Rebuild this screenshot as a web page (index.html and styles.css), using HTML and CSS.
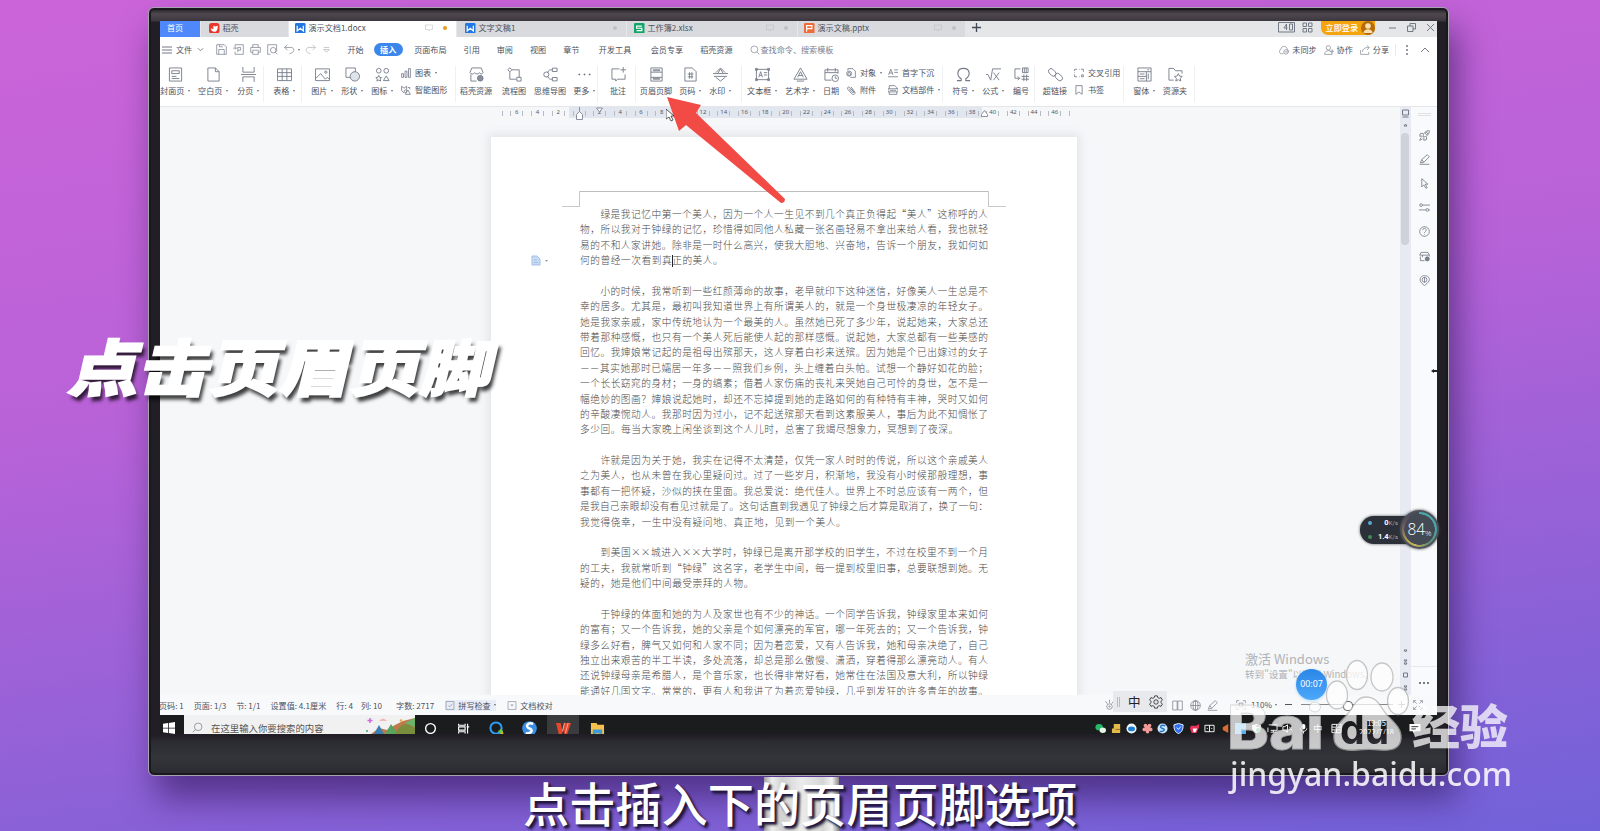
FILE: index.html
```html
<!DOCTYPE html>
<html lang="zh-CN">
<head>
<meta charset="utf-8">
<title>点击页眉页脚</title>
<link rel="stylesheet" href="styles.css">
</head>
<body>
<svg class="defs" width="0" height="0">
<symbol id="cover" viewBox="0 0 16 16"><path d="M1.5 1h13v14h-13zM4 4h8v3H4zM4 10h5M4 12.3h8"/></symbol>
<symbol id="blank" viewBox="0 0 16 16"><path d="M2 1h8l4 4v10H2zM10 1v4h4"/></symbol>
<symbol id="split" viewBox="0 0 16 16"><path d="M2 0v5.500h12V0M0 8h16M2 16v-5.500h12V16"/></symbol>
<symbol id="table" viewBox="0 0 16 16"><path d="M.5 2h15v12.500H.5zM.5 6h15M.5 10h15M5.500 2v12.500M10.500 2v12.500"/></symbol>
<symbol id="pic" viewBox="0 0 16 16"><path d="M.5 2h15v12.500H.5zM1 12l5-5 5 6 2-2 2 2"/><circle cx="11.500" cy="5.500" r="1.200"/></symbol>
<symbol id="shape" viewBox="0 0 16 16"><path d="M1 1h10v10H1z"/><circle cx="10.500" cy="10" r="5" fill="#dfe3ea"/></symbol>
<symbol id="icons" viewBox="0 0 16 16"><circle cx="4" cy="4" r="2.500"/><circle cx="12" cy="4" r="2.500"/><path d="M4 9l1 2 2 .3-1.500 1.500.5 2.200-2-1-2 1 .5-2.200L1 11.300l2-.3zM12 9.500l3 5H9z"/></symbol>
<symbol id="chart" viewBox="0 0 16 16"><path d="M1 9h3v6H1zM6.500 5h3v10h-3zM12 1h3v14h-3z"/></symbol>
<symbol id="smart" viewBox="0 0 16 16"><path d="M1 2l4 3 4-3v6M1 2v7l4 4M7 15l4-7 4 7zM11 4h3v3"/><circle cx="7" cy="10" r="2"/></symbol>
<symbol id="store" viewBox="0 0 16 16"><path d="M1 6l2-5h10l2 5c-1 2-3 2-4 0-1 2-4 2-5 0-1 2-4 2-5 0zM2 8v7h6"/><circle cx="12" cy="12" r="3" fill="#888e9b"/></symbol>
<symbol id="flow" viewBox="0 0 16 16"><path d="M3 .8L5.200 3 3 5.200.8 3zM5.200 3H13v8M3 5.200V13h7M10.500 11h4.500v4h-4.500z"/></symbol>
<symbol id="mind" viewBox="0 0 16 16"><circle cx="3.500" cy="8" r="2.700"/><path d="M5 6c1-3 2-3 5-3M5 10c1 3 2 3 5 3M10 1.200h5v3.600h-5zM10 11.200h5v3.600h-5z"/></symbol>
<symbol id="more" viewBox="0 0 16 16"><path d="M2 7.500h1v1H2zM7.500 7.500h1v1h-1zM13 7.500h1v1h-1z" fill="#5a6070"/></symbol>
<symbol id="comment" viewBox="0 0 16 16"><path d="M9 2H1v11h4v2l2-2h8V8M10 3h6M13 0v6"/></symbol>
<symbol id="hf" viewBox="0 0 16 16"><path d="M2 1h12v14H2zM2 5.500h12M2 11h12" /><path d="M4.500 3h7v1h-7zM4.500 12h7v1h-7z"/></symbol>
<symbol id="pageno" viewBox="0 0 16 16"><path d="M2 1h8l4 4v10H2zM5 7.500h6M5 10.500h6M7 5.500v7M9.500 5.500v7"/></symbol>
<symbol id="wm" viewBox="0 0 16 16"><path d="M0 7h16M1 10h14M3 6l5-5 5 5M3 11l5 4 5-4M5 7l3-5 3 5"/></symbol>
<symbol id="tbox" viewBox="0 0 16 16"><path d="M1.500 2.500h13v11h-13zM.5 1.500h2v2h-2zM13.500 1.500h2v2h-2zM.5 12.500h2v2h-2zM13.500 12.500h2v2h-2zM4 11l2-6 2 6M5 9h2M9.500 6H13M9.500 8.500H13"/></symbol>
<symbol id="wordart" viewBox="0 0 16 16"><path d="M8 1l7 12H1zM5 11l3-6 3 6M6 9h4M4 15h8"/></symbol>
<symbol id="date" viewBox="0 0 16 16"><path d="M8 14H1V3h14v4M1 6h14M4 1v4M12 1v4"/><circle cx="12" cy="12" r="3.500"/><path d="M12 10v2h2"/></symbol>
<symbol id="obj" viewBox="0 0 16 16"><path d="M3 4V1h8l4 4v10H7"/><circle cx="5" cy="9" r="4"/><path d="M3 8l2-1 2 1v3l-2 1-2-1z"/></symbol>
<symbol id="clip" viewBox="0 0 16 16"><path d="M13 12L6 4C4 2 1 4 3 7l6 7c3 3 7 0 5-3L8 3M5 6l5 6c2 1 3 0 2-2L8 6"/></symbol>
<symbol id="drop" viewBox="0 0 16 16"><path d="M1 11L4.500 2 8 11M2 8h5M10 3h6M10 7h6M0 14h16"/></symbol>
<symbol id="part" viewBox="0 0 16 16"><path d="M2 6V1h9l3 3v2M2 11v4h12v-4M0 6h16v5H0zM3 8.500h10"/></symbol>
<symbol id="omega" viewBox="0 0 16 16"><path d="M1 14.500h4.500v-2C0 9 1 1.500 8 1.500s8 7.500 2.500 11v2H15" stroke-width="1.200"/></symbol>
<symbol id="sqrt" viewBox="0 0 16 16"><path d="M0 8h2l3 6L7 2h9M8 6l6 8M14 6l-6 8"/></symbol>
<symbol id="num" viewBox="0 0 16 16"><path d="M7 2H1v10h5M4 10l2 2-2 2M9 1h6v5H9zM11 1v5M13 1v5M8 10h8M8 13h8M10.500 8v7M13.500 8v7"/></symbol>
<symbol id="link" viewBox="0 0 16 16"><rect x="0" y="3" width="9" height="5.500" rx="2.700" transform="rotate(45 4.500 5.700)"/><rect x="7" y="8" width="9" height="5.500" rx="2.700" transform="rotate(45 11.500 10.700)"/></symbol>
<symbol id="xref" viewBox="0 0 16 16"><path d="M1 5V2h4M11 2h4v4M1 10v4h4M8 2h1M1 7v1M8 14h1M12 11h3v3h-3z"/></symbol>
<symbol id="mark" viewBox="0 0 16 16"><path d="M3 1h10v14l-5-4-5 4z"/></symbol>
<symbol id="form" viewBox="0 0 16 16"><path d="M1 1h14v14H1zM1 5h14M1 10h9M10 5v10M12 7v6M3 7.500h5M3 12.500h5M11 3h2"/></symbol>
<symbol id="folder" viewBox="0 0 16 16"><path d="M6 14H1V1.500h5l2 2.500h7v3M11 7l1.300 2.700 2.900.3-2.200 2 .7 3-2.700-1.500L8.300 15l.7-3-2.200-2 2.900-.3z"/></symbol>
<symbol id="save" viewBox="0 0 16 16"><path d="M1 1h11l3 3v11H1zM4 15V8h8v7M5 1v3h5"/></symbol>
<symbol id="pdf" viewBox="0 0 16 16"><path d="M3 4V1h12v14H3v-4M0 6h5M3 4l2 2-2 2M7 12V5h4v4H7"/></symbol>
<symbol id="print" viewBox="0 0 16 16"><path d="M4 5V1h8v4M4 12H1V5h14v7h-3M4 9h8v6H4z"/></symbol>
<symbol id="preview" viewBox="0 0 16 16"><path d="M5 15H1V1h13v10"/><circle cx="9" cy="9" r="4"/><path d="M12 12l3 3"/></symbol>
<symbol id="undo" viewBox="0 0 16 16"><path d="M5 1L1 5l4 4M1 5h9c6 0 6 8-2 9"/></symbol>
<symbol id="redo" viewBox="0 0 16 16"><path d="M11 1l4 4-4 4M15 5H6c-6 0-6 8 2 9"/></symbol>
<symbol id="search" viewBox="0 0 16 16"><circle cx="7" cy="7" r="5.500"/><path d="M11 11l4 4"/></symbol>
<symbol id="cloud" viewBox="0 0 16 16"><path d="M7 14H4C0 14 0 8 3 7c1-7 10-6 10 0 2 1 3 3 2 5"/><circle cx="11" cy="11" r="3.500"/><path d="M9 11h4"/></symbol>
<symbol id="user" viewBox="0 0 16 16"><circle cx="7" cy="4.500" r="3.500"/><path d="M1 15c0-8 12-8 12 0zM10 10h6M13 7v6"/></symbol>
<symbol id="share" viewBox="0 0 16 16"><path d="M1 8v7h13v-4M4 11c0-5 4-7 10-7M11 1l4 3-4 4"/></symbol>
<symbol id="screen" viewBox="0 0 16 16"><path d="M1 2h14v9H9l-1 3-2-3H1z"/></symbol>
<symbol id="rocket" viewBox="0 0 16 16"><path d="M6 10C6 4 10 1 15 1c0 5-3 9-9 9zM6 5H2L1 9h4M11 10v4l-4 1v-4M3 11l-2 4 4-2"/><circle cx="11" cy="5" r="1.500"/></symbol>
<symbol id="pen" viewBox="0 0 16 16"><path d="M2 13l2-5 8-7 3 3-8 8zM4 8l3 4M1 15h14"/></symbol>
<symbol id="cursor" viewBox="0 0 16 16"><path d="M4 1l9 8H9l3 5-2 1-3-5-3 3z"/></symbol>
<symbol id="sliders" viewBox="0 0 16 16"><circle cx="3" cy="4.500" r="2"/><circle cx="12" cy="11.500" r="2"/><path d="M5 4.500h11M0 11.500h10M14 11.500h2"/></symbol>
<symbol id="help" viewBox="0 0 16 16"><circle cx="8" cy="8" r="7"/><path d="M5.500 6c0-4 5-3 5 0 0 2-2.500 2-2.500 4M8 11.500v1"/></symbol>
<symbol id="skin" viewBox="0 0 16 16"><path d="M8 14H2V8M1 6l2-4h10l2 4v2M1 6h14M5 6v3"/><circle cx="12" cy="11.500" r="3" fill="#777d8a"/></symbol>
<symbol id="pin" viewBox="0 0 16 16"><path d="M8 15.500L4 12C-2 5 5 0 8 1c8 0 9 7 4 11z"/><circle cx="8" cy="7" r="3.500"/><path d="M8 3v8"/></symbol>
<symbol id="book" viewBox="0 0 16 16"><path d="M1 1.500h6.500v13H1zM8.500 1.500H15v13H8.500z"/></symbol>
<symbol id="globe" viewBox="0 0 16 16"><circle cx="8" cy="8" r="7"/><path d="M8 1v14M1 8h14"/><ellipse cx="8" cy="8" rx="3.500" ry="7"/></symbol>
<symbol id="gear" viewBox="0 0 16 16"><path d="M6.500 1h3l.6 2 1.700.8 2-.8 1.500 2.600-1.500 1.500v1.800l1.500 1.500-1.500 2.600-2-.8-1.700.8-.6 2h-3l-.6-2-1.700-.8-2 .8L.7 10.400l1.500-1.500V7.100L.7 5.600 2.200 3l2 .8L5.900 3z"/><circle cx="8" cy="8" r="2.500"/></symbol>
<symbol id="box" viewBox="0 0 16 16"><path d="M1 1h14v14H1zM5 8l2.500 2.500L12 5"/></symbol>
<symbol id="boxx" viewBox="0 0 16 16"><path d="M1 1h14v14H1zM6 5.500l4 4M10 5.500l-4 4"/></symbol>
<symbol id="eye" viewBox="0 0 16 16"><path d="M2 3l3 4M8 1v5M14 3l-3 4"/><circle cx="8" cy="11" r="4"/><circle cx="8" cy="11" r="1"/></symbol>
</svg>

<main class="monitor">
<div class="screen">
  <header class="tabs">
    <div class="tab home">首页</div>
    <div class="tab docer"><svg class="badge" viewBox="0 0 12 12"><rect width="12" height="12" rx="3" fill="#e8382d"/><path d="M2 6l3 1V3l2 1 3-1c0 6-2 7-4 7S2 8 2 6z" fill="#fff"/></svg>稻壳</div>
    <div class="tab active"><svg class="badge" viewBox="0 0 12 12"><rect width="12" height="12" rx="1.500" fill="#2276e0"/><path d="M2.500 3v6L6 6l3.500 3V3" fill="none" stroke="#fff" stroke-width="1.400"/></svg>演示文档1.docx<svg class="mini"><use href="#screen"/></svg><i class="dot amber"></i></div>
    <div class="tab word"><svg class="badge" viewBox="0 0 12 12"><rect width="12" height="12" rx="1.500" fill="#2276e0"/><path d="M2.500 3v6L6 6l3.500 3V3" fill="none" stroke="#fff" stroke-width="1.400"/></svg>文字文稿1<i class="dot"></i></div>
    <div class="tab sheet"><svg class="badge" viewBox="0 0 12 12"><rect width="12" height="12" rx="1.500" fill="#12a568"/><path d="M9 3.500H3V6h6v2.700H3" fill="none" stroke="#fff" stroke-width="1.300"/></svg>工作簿2.xlsx<svg class="mini"><use href="#screen"/></svg><i class="dot"></i></div>
    <div class="tab slide"><svg class="badge" viewBox="0 0 12 12"><rect width="12" height="12" rx="1.500" fill="#ee6a37"/><path d="M3 10V3h6v3.500H3" fill="none" stroke="#fff" stroke-width="1.300"/></svg>演示文稿.pptx<svg class="mini"><use href="#screen"/></svg><i class="dot"></i></div>
    <svg class="plus" viewBox="0 0 9 9"><path d="M0 4.500h9M4.500 0v9"/></svg>
    <div class="window-tools">
      <svg class="w1" viewBox="0 0 17 11"><path d="M.5 .5h16v9.500H.5zM8.500 2v6M8.500 2L6 6h3.500M11.500 2h3v6h-3z"/></svg>
      <svg class="w2" viewBox="0 0 11 11"><path d="M1 1h3.500v3.500H1zM6.500 1H10v3.500H6.500zM1 6.500h3.500V10H1zM6.500 6.500H10V10H6.500z"/></svg>
      <span class="login">立即登录<svg viewBox="0 0 14 14"><circle cx="7" cy="7" r="7" fill="#b56c09"/><circle cx="7" cy="5" r="2.800" fill="#f8e0b0"/><path d="M2.500 12c0-5 9-5 9 0z" fill="#f8e0b0"/></svg></span>
      <svg class="w3" viewBox="0 0 9 9"><path d="M1 5h7"/></svg>
      <svg class="w3" viewBox="0 0 9 9"><path d="M.5 3h5.500v5.500H.5zM3 3V.5h5.500V6H6"/></svg>
      <svg class="w3" viewBox="0 0 9 9"><path d="M1 1l7 7M8 1L1 8"/></svg>
    </div>
  </header>

  <nav class="menu">
    <svg class="burger" viewBox="0 0 10 8"><path d="M0 1h10M0 4h10M0 7h10"/></svg><span class="file">文件</span><svg class="chev" viewBox="0 0 8 8"><path d="M1 2.500l3 3 3-3"/></svg>
    <span class="quick"><svg><use href="#save"/></svg><svg><use href="#pdf"/></svg><svg><use href="#print"/></svg><svg><use href="#preview"/></svg><svg><use href="#undo"/></svg><i></i><svg class="pale"><use href="#redo"/></svg><svg class="pale" viewBox="0 0 16 16"><path d="M4 5h8M4 8l4 4 4-4z"/></svg></span>
    <span class="m-start">开始</span><span class="pill">插入</span><span class="m-layout">页面布局</span><span class="g17">引用</span><span class="g17">审阅</span><span class="g17">视图</span><span class="g17">章节</span><span class="g20">开发工具</span><span class="g20">会员专享</span><span class="g17">稻壳资源</span>
    <span class="find"><svg><use href="#search"/></svg>查找命令、搜索模板</span>
    <span class="right"><svg><use href="#cloud"/></svg>未同步<svg><use href="#user"/></svg>协作<svg><use href="#share"/></svg>分享</span>
    <span class="tail"><svg class="dots" viewBox="0 0 2 10"><path d="M0 1h2M0 5h2M0 9h2"/></svg><svg viewBox="0 0 10 8"><path d="M1 6l4-4 4 4"/></svg></span>
  </nav>

  <section class="ribbon">
    <div class="it i3"><svg><use href="#cover"/></svg><span>封面页<i></i></span></div>
    <div class="it i14"><svg><use href="#blank"/></svg><span>空白页<i></i></span></div>
    <div class="it i11"><svg><use href="#split"/></svg><span>分页<i></i></span></div>
    <div class="it i12 sep"><svg><use href="#table"/></svg><span>表格<i></i></span></div>
    <div class="it i14 sep"><svg><use href="#pic"/></svg><span>图片<i></i></span></div>
    <div class="it i6"><svg><use href="#shape"/></svg><span>形状<i></i></span></div>
    <div class="it i6"><svg><use href="#icons"/></svg><span>图标<i></i></span></div>
    <div class="pair p-chart"><div><svg><use href="#chart"/></svg>图表<i></i></div><div><svg><use href="#smart"/></svg>智能图形</div></div>
    <div class="it i13 sep"><svg><use href="#store"/></svg><span>稻壳资源</span></div>
    <div class="it i14"><svg><use href="#flow"/></svg><span>流程图</span></div>
    <div class="it i12"><svg><use href="#mind"/></svg><span>思维导图</span></div>
    <div class="it i10"><svg><use href="#more"/></svg><span>更多<i></i></span></div>
    <div class="it i10 sep"><svg><use href="#comment"/></svg><span>批注</span></div>
    <div class="it i14 sep"><svg><use href="#hf"/></svg><span>页眉页脚</span></div>
    <div class="it i10"><svg><use href="#pageno"/></svg><span>页码<i></i></span></div>
    <div class="it i6"><svg><use href="#wm"/></svg><span>水印<i></i></span></div>
    <div class="it i18 sep"><svg><use href="#tbox"/></svg><span>文本框<i></i></span></div>
    <div class="it i14"><svg><use href="#wordart"/></svg><span>艺术字<i></i></span></div>
    <div class="it i7"><svg><use href="#date"/></svg><span>日期</span></div>
    <div class="pair p-obj"><div><svg><use href="#obj"/></svg>对象<i></i></div><div><svg><use href="#clip"/></svg>附件</div></div>
    <div class="pair p-drop"><div><svg><use href="#drop"/></svg>首字下沉</div><div><svg><use href="#part"/></svg>文档部件<i></i></div></div>
    <div class="it i11 sep"><svg><use href="#omega"/></svg><span>符号<i></i></span></div>
    <div class="it i6"><svg><use href="#sqrt"/></svg><span>公式<i></i></span></div>
    <div class="it i4"><svg><use href="#num"/></svg><span>编号</span></div>
    <div class="it i10 sep"><svg><use href="#link"/></svg><span>超链接</span></div>
    <div class="pair p-ref"><div><svg><use href="#xref"/></svg>交叉引用</div><div><svg><use href="#mark"/></svg>书签</div></div>
    <div class="it i10 sep"><svg><use href="#form"/></svg><span>窗体<i></i></span></div>
    <div class="it i7"><svg><use href="#folder"/></svg><span>资源夹</span></div>
    <div class="ribbon-end"></div>
  </section>

  <section class="work">
    <div class="canvas">
      <div class="ruler">
        <b class="end"></b><b>6</b><b>4</b><b>2</b><b class="in hid"></b><b class="in">2</b><b class="in">4</b><b class="in">6</b><b class="in">8</b><b class="in">10</b><b class="in">12</b><b class="in">14</b><b class="in">16</b><b class="in">18</b><b class="in">20</b><b class="in">22</b><b class="in">24</b><b class="in">26</b><b class="in">28</b><b class="in">30</b><b class="in">32</b><b class="in">34</b><b class="in">36</b><b class="in">38</b><b>40</b><b>42</b><b>44</b><b>46</b><b class="end"></b>
      </div>
      <svg class="stops" viewBox="0 0 430 16"><path d="M10.500 0v6M7.500 8.500l3-3 3 3v5h-6zM27.500 2h6l-3 4zM412.500 8.500l3-4 3 4v2h-6z"/></svg>
      <article class="page">
        <div class="margin-marks"><i class="ml"></i><i class="mt"></i><i class="mr"></i></div>
        <div class="text">
<p class="in">绿是我记忆中第一个美人，因为一个人一生见不到几个真正负得起“美人”这称呼的人</p>
<p>物，所以我对于钟绿的记忆，珍惜得如同他人私藏一张名画轻易不拿出来给人看，我也就轻</p>
<p>易的不和人家讲她。除非是一时什么高兴，使我大胆地、兴奋地，告诉一个朋友，我如何如</p>
<p class="last">何的曾经一次看到真<u></u>正的美人。</p>
<p class="gap"></p>
<p class="in">小的时候，我常听到一些红颜薄命的故事，老早就印下这种迷信，好像美人一生总是不</p>
<p>幸的居多。尤其是，最初叫我知道世界上有所谓美人的，就是一个身世极凄凉的年轻女子。</p>
<p>她是我家亲戚，家中传统地认为一个最美的人。虽然她已死了多少年，说起她来，大家总还</p>
<p>带着那种感慨，也只有一个美人死后能使人起的那样感慨。说起她，大家总都有一些美感的</p>
<p>回忆。我婶娘常记起的是祖母出殡那天，这人穿着白衫来送殡。因为她是个已出嫁过的女子</p>
<p>－－其实她那时已孀居一年多－－照我们乡例，头上缠着白头帕。试想一个静好如花的脸；</p>
<p>一个长长窈窕的身材；一身的缟素；借着人家伤痛的丧礼来哭她自己可怜的身世，怎不是一</p>
<p>幅绝妙的图画？婶娘说起她时，却还不忘掉提到她的走路如何的有种特有丰神，哭时又如何</p>
<p>的辛酸凄惋动人。我那时因为过小，记不起送殡那天看到这素服美人，事后为此不知惆怅了</p>
<p class="last">多少回。每当大家晚上闲坐谈到这个人儿时，总害了我竭尽想象力，冥想到了夜深。</p>
<p class="gap"></p>
<p class="in">许就是因为关于她，我实在记得不太清楚，仅凭一家人时时的传说，所以这个亲戚美人</p>
<p>之为美人，也从未曾在我心里疑问过。过了一些岁月，积渐地，我没有小时候那般理想，事</p>
<p>事都有一把怀疑，沙似的挟在里面。我总爱说：绝代佳人。世界上不时总应该有一两个，但</p>
<p>是我自己亲眼却没有看见过就是了。这句话直到我遇见了钟绿之后才算是取消了，换了一句：</p>
<p class="last">我觉得侥幸，一生中没有疑问地、真正地，见到一个美人。</p>
<p class="gap"></p>
<p class="in">到美国××城进入××大学时，钟绿已是离开那学校的旧学生，不过在校里不到一个月</p>
<p>的工夫，我就常听到“钟绿”这名字，老学生中间，每一提到校里旧事，总要联想到她。无</p>
<p class="last">疑的，她是他们中间最受崇拜的人物。</p>
<p class="gap"></p>
<p class="in">于钟绿的体面和她的为人及家世也有不少的神话。一个同学告诉我，钟绿家里本来如何</p>
<p>的富有；又一个告诉我，她的父亲是个如何漂亮的军官，哪一年死去的；又一个告诉我，钟</p>
<p>绿多么好看，脾气又如何和人家不同；因为着恋爱，又有人告诉我，她和母亲决绝了，自己</p>
<p>独立出来艰苦的半工半读，多处流落，却总是那么傲慢、潇洒，穿着得那么漂亮动人。有人</p>
<p>还说钟绿母亲是希腊人，是个音乐家，也长得非常好看，她常住在法国及意大利，所以钟绿</p>
<p>能通好几国文字。常常的，更有人和我讲了为着恋爱钟绿，几乎到发狂的许多青年的故事。</p>
        </div>
        <svg class="para-tag" viewBox="0 0 18 11"><path d="M1 1h5l3 3v6H1z" fill="#c9dcf5" stroke="#a3bfe8"/><path d="M3 5h3M3 7.500h4" stroke="#a3bfe8"/><path d="M14 5h3l-1.500 2z" fill="#999"/></svg>
      </article>
      <div class="activate"><strong>激活 Windows</strong><span>转到"设置"以激活 Windows。</span></div>
    </div>
    <div class="scroll"><svg viewBox="0 0 11 26"><path d="M2.500 3h6v5h-6zM2.500 10h6M4 19l1.500-2L7 19z"/></svg><div class="thumb"></div><svg class="pager" viewBox="0 0 11 52"><path d="M4 7l1.500 2L7 7zM4 17l1.500 2L7 17zM4 20l1.500 2L7 20zM3.500 30h4v4h-4zM4 43l1.500 2L7 43zM4 46l1.500 2L7 46z"/></svg></div>
    <aside class="side"><em></em><svg><use href="#rocket"/></svg><svg><use href="#pen"/></svg><svg><use href="#cursor"/></svg><svg><use href="#sliders"/></svg><svg><use href="#help"/></svg><svg><use href="#skin"/></svg><svg><use href="#pin"/></svg><svg class="notch" viewBox="0 0 6 4"><path d="M0 2l3-2v1h3v2H3v1z" fill="#222" stroke="none"/></svg><div class="side-more"><svg viewBox="0 0 12 4"><path d="M1 1h2v2H1zM5 1h2v2H5zM9 1h2v2H9z" fill="#777c88" stroke="none"/></svg></div></aside>
  </section>

  <footer class="status">
    <span>页码: 1</span><span>页面: 1/3</span><span>节: 1/1</span><span>设置值: 4.1厘米</span><span>行: 4</span><span class="col">列: 10</span><span class="cnt">字数: 2717</span><span class="chk"><svg><use href="#box"/></svg>拼写检查<i></i></span><span class="proof"><svg><use href="#boxx"/></svg>文档校对</span>
    <svg class="eye"><use href="#eye"/></svg>
    <span class="view"><svg><use href="#book"/></svg><svg><use href="#globe"/></svg><svg><use href="#pen"/></svg></span>
    <span class="zoom"><svg viewBox="0 0 16 16"><path d="M1 5V1h4M11 1h4v4M1 11v4h4M11 15h4v-4M5 5h6v6H5z"/></svg>110%<i></i><b class="minus"></b><b class="track"></b><svg class="plus-z" viewBox="0 0 8 8"><path d="M0 4h8M4 0v8"/></svg><svg class="full" viewBox="0 0 16 16"><path d="M1 5V1h4M1 1l5 5M11 1h4v4M15 1l-5 5M1 11v4h4M1 15l5-5M11 15h4v-4M15 15l-5-5"/></svg></span>
    <div class="ime"><i></i>中<svg><use href="#gear"/></svg></div>
  </footer>

  <footer class="taskbar">
    <svg class="start" viewBox="0 0 12 12"><path d="M0 1.700l5-.7v4.700H0zM5.800.9L12 0v5.700H5.800zM0 6.400h5V11l-5-.7zM5.800 6.400H12V12l-6.200-.9z" fill="#fff"/></svg>
    <div class="searchbox"><svg><use href="#search"/></svg>在这里输入你要搜索的内容
      <svg class="art" viewBox="0 0 50 16"><path d="M6 16l8-6 8 2 8-5 8-4 12-3v16z" fill="#bd7a4b"/><path d="M9 16l5-9 5 9z" fill="#3a7fb0"/><path d="M20 16l6-10 7 10z" fill="#5ba45e"/><path d="M30 16q8-16 20-6v6z" fill="#7a8d3c"/><path d="M40 5l10-5v9z" fill="#6cb36b"/><path d="M14 3q4-5 8 0z" fill="#f3b9b6"/><path d="M5 0v5M2.500 2.500h5" stroke="#c86bdc" stroke-width="1.500"/><circle cx="36" cy="2.500" r="1.200" fill="#f0a42f"/><circle cx="2" cy="13" r="1" fill="#3da86a"/></svg>
    </div>
    <div class="apps">
      <svg viewBox="0 0 16 16"><circle cx="8" cy="8" r="6" fill="none" stroke="#fff" stroke-width="1.700"/></svg>
      <svg viewBox="0 0 16 16"><path d="M2 2v2h8V2M2 14v-2h8v2M2 6h8v4H2zM13 2v12M12 6h3" fill="none" stroke="#fff" stroke-width="1.400"/></svg>
      <svg viewBox="0 0 16 16"><circle cx="7.500" cy="7.500" r="6" fill="none" stroke="#2f9cf2" stroke-width="2.200"/><path d="M10 11h5M12.500 8.500v5.500" stroke="#6fc94a" stroke-width="1.800"/><circle cx="14" cy="13" r="1.300" fill="#f4b32a"/></svg>
      <svg viewBox="0 0 16 16"><circle cx="8" cy="8" r="7.800" fill="#3a8ee6"/><path d="M12 3c-6-2-9 3-4 5s1 6-4 5" fill="none" stroke="#fff" stroke-width="2.600"/></svg>
      <span class="wps"><svg viewBox="0 0 16 16"><path d="M0 2h5l2 9 2-9h7l-4 12H9L8 9l-2 5H3z" fill="#e8452c"/><path d="M9 2l-2 9M13 2l-3 11" stroke="#ffb29e"/></svg></span>
      <svg viewBox="0 0 16 16"><path d="M1 2h6l1 2h7v12H1z" fill="#f5c04c"/><path d="M3 9h10v7h-3v-3H6v3H3z" fill="#3f9cd8"/></svg>
    </div>
    <div class="tray">
      <svg viewBox="0 0 12 12"><ellipse cx="4.500" cy="4.500" rx="4" ry="3.500" fill="#25b866"/><ellipse cx="8.500" cy="8" rx="3.500" ry="3" fill="#e4f5ea"/></svg>
      <svg viewBox="0 0 12 12"><path d="M3 1h7v10H1V6h2z" fill="#e5b94a"/><path d="M5 7h5" stroke="#8d6a1c"/></svg>
      <svg viewBox="0 0 12 12"><circle cx="6" cy="6" r="5.500" fill="#eef6fb"/><ellipse cx="6" cy="6.500" rx="3.800" ry="2.600" fill="#1d7fd0"/></svg>
      <svg viewBox="0 0 12 12"><g fill="#f19a98"><circle cx="6" cy="6" r="3.200"/><circle cx="3.800" cy="2.800" r="2"/><circle cx="8.200" cy="2.800" r="2"/><circle cx="2.500" cy="7" r="2"/><circle cx="9.500" cy="7" r="2"/><circle cx="6" cy="9.500" r="2"/></g></svg>
      <svg viewBox="0 0 12 12"><circle cx="6" cy="6" r="5.500" fill="#cfe6f8"/><path d="M9 3C4 1 2 5 6 6s1 4-3 3" fill="none" stroke="#2276c8" stroke-width="1.600"/></svg>
      <svg viewBox="0 0 12 12"><path d="M6 .5l5 1.500c0 5-1 8-5 9.500C2 10 1 7 1 2z" fill="#2e6ef0" stroke="#fff"/><path d="M4 5l2 2 2.500-3" fill="none" stroke="#fff"/></svg>
      <svg viewBox="0 0 12 12"><path d="M2 3h6l3-2v4L8 11H3L1 6z" fill="#e7325b"/><path d="M4 6h5l-2 4H5z" fill="#fff"/></svg>
      <svg viewBox="0 0 12 12"><path d="M1 2.500h10v7H1zM6 2.500v7M3 6h1M8 6h1" fill="none" stroke="#fff"/></svg>
      <svg viewBox="0 0 12 12"><path d="M3 4.500L9 1v10L3 7.500z" fill="#d96a35"/></svg>
      <svg viewBox="0 0 12 12"><rect width="12" height="12" fill="#5cb0e8"/></svg>
      <svg viewBox="0 0 12 12"><path d="M6 1l5 1.500C11 8 9 10 6 11 3 10 1 8 1 2.500z" fill="#eee"/><circle cx="8" cy="8" r="2.500" fill="#4aa861"/></svg>
      <svg viewBox="0 0 12 12"><path d="M2 2h9v6H4M7 8v2M4 10h6M1 5v5" fill="none" stroke="#fff"/></svg>
      <svg viewBox="0 0 12 12"><path d="M1 4h2l3-2v8L3 8H1zM8 4l3 4M11 4L8 8" fill="none" stroke="#fff"/></svg>
      <svg viewBox="0 0 12 12"><rect x="4" y="1" width="4" height="6" rx="2" fill="#fff"/><path d="M2.500 6c0 4 7 4 7 0M6 9v2.500" fill="none" stroke="#fff"/></svg>
      <span>中</span><svg class="grid" viewBox="0 0 12 12"><path d="M1 1.500h10v9H1zM1 4.500h10M1 7.500h10M6 1.500v9" fill="none" stroke="#fff"/></svg>
      <span class="clock">19:05<br>2022/7/18</span>
      <svg class="note" viewBox="0 0 12 12"><path d="M0 1h12v8H6l-2 2V9H0z" fill="#fff"/><path d="M2 4h8M2 6.500h5" stroke="#222"/></svg>
    </div>
  </footer>
</div>
</main>

<svg class="arrow" viewBox="0 0 130 120"><path d="M1 2L35 10 30 18 119 104Q119 108 115 108L20 30 13 36z" fill="#f24a44"/><path d="M0 14v10l3-2 2 4 2-1-2-4h3z" fill="#fff" stroke="#333" stroke-width=".8"/></svg>
<div class="speed"><div class="rates"><span><i></i>0<small>K/s</small></span><span><i></i>1.4<small>K/s</small></span></div><div class="gauge">84<small>%</small></div></div>
<div class="timer">00:07</div>
<div class="headline">点击页眉页脚</div>
<div class="stand"></div>
<div class="subtitle">点击插入下的页眉页脚选项</div>
<svg class="brand" viewBox="0 0 300 165">
  <defs><mask id="cut" maskUnits="userSpaceOnUse" x="0" y="0" width="300" height="165"><rect width="300" height="165" fill="#fff"/><text x="125" y="104" class="du" textLength="49" lengthAdjust="spacingAndGlyphs">du</text></mask></defs>
  <g class="overlay">
    <text x="12" y="109" class="bai" textLength="97" lengthAdjust="spacingAndGlyphs">Bai</text>
    <path class="outlined" d="M151 57c12 0 14 10 21 18 8 8 15 14 14 24-1 9-9 12-20 11-9-1-15-1-24 0-11 1-22-1-23-11-1-9 4-15 10-21 9-8 11-21 22-21z" mask="url(#cut)"/>
    <ellipse class="outlined" cx="122" cy="55" rx="10.500" ry="14"/><ellipse class="outlined" cx="142" cy="35" rx="10.500" ry="14.500"/><ellipse class="outlined" cx="167" cy="37" rx="11" ry="14"/><ellipse class="outlined" cx="183" cy="61" rx="10.500" ry="13.500"/>
    <text x="197" y="104" class="jy" textLength="96" lengthAdjust="spacingAndGlyphs">经验</text>
  </g>
  <text x="15" y="146" class="site" textLength="282" lengthAdjust="spacingAndGlyphs">jingyan.baidu.com</text>
</svg>
</body>
</html>
```
FILE: styles.css
```css
* { box-sizing: border-box; }
body {
  margin: 0; width: 1600px; height: 831px; overflow: hidden; position: relative;
  display: flex; justify-content: flex-start; align-items: flex-start;
  font-family: "Noto Sans CJK SC", "Noto Sans", sans-serif; font-size: 8.1px; color: #4d5260;
  background: linear-gradient(172deg, #cc64d9 0%, #b862d8 42%, #8961d7 80%, #7162d9 100%);
}
svg { fill: none; stroke: #737987; stroke-width: 1; display: block; flex: none; }
.defs { position: absolute; }
.monitor {
  margin: 7px 0 0 148px; width: 1301px; height: 769px; padding: 13px 12px 0; border-radius: 6px;
  border: 1px solid #a9a2b0; background: linear-gradient(#1b1a1f 0, #50484f 6px, #3b363e 13px, #221e25 14px, #221e25 728px, #2a2c31 733px, #34353b 750px, #29292e 768px);
  box-shadow: 8px 22px 34px rgba(45, 20, 85, .6), inset 0 0 0 2px #19181c;
}
.screen { width: 1277px; height: 713px; display: flex; flex-direction: column; overflow: hidden; background: #fff; margin-left: -1px; }

.tabs { height: 16px; flex: none; display: flex; background: #e4e6e8; }
.tab { height: 16px; display: flex; align-items: center; background: #d9dade; padding: 0 6px 2px; border-left: 1px solid #e6e7ea; white-space: nowrap; line-height: 12px; }
.home { width: 40px; background: #4f88fa; color: #fff; border: 0; padding-left: 7px; }
.docer { width: 88px; padding-left: 8px; }
.active { width: 168px; background: #fff; }
.word { width: 170px; padding-left: 8px; }
.sheet { width: 171px; padding-left: 7px; }
.slide { width: 168px; }
.badge { width: 10.500px; height: 10.500px; margin-right: 3px; stroke: none; }
.mini { width: 8px; height: 8px; margin-left: auto; stroke: #b6b9c0; }
.dot { width: 4px; height: 4px; border-radius: 2px; background: #bfc1c6; margin: 0 3px 0 10px; }
.word .dot { margin-left: auto; }
.dot.amber { background: #e99a1b; }
.plus { width: 9px; height: 9px; margin: 2px 0 0 7px; stroke: #444a55; stroke-width: 1.300; }
.window-tools { margin-left: auto; display: flex; align-items: center; padding: 0 2px 3px 0; }
.w1 { width: 17px; height: 11px; margin-right: 7px; }
.w2 { width: 11px; height: 11px; margin-right: 8px; }
.w3 { width: 9px; height: 9px; margin-left: 10px; }
.login { width: 54px; height: 14px; border-radius: 0 0 7px 7px; background: #f6a40e; color: #fff; display: flex; align-items: center; justify-content: flex-end; gap: 3px; font-weight: 500; margin-right: 3px; }
.login svg { width: 14px; height: 14px; stroke: none; }

.menu { height: 26px; flex: none; display: flex; align-items: center; white-space: nowrap; padding: 0 0 1px 2px; }
.burger { width: 10px; height: 8px; margin-right: 4px; }
.chev { width: 7px; height: 7px; margin-left: 5px; }
.quick { display: flex; align-items: center; margin-left: 12px; gap: 5.900px; }
.quick svg { width: 11px; height: 11px; }
.quick i { border: 1.500px solid transparent; border-top: 2px solid #676d7a; border-bottom: 0; margin: 0 -1px 0 -3px; }
.quick .pale { stroke: #a9adb7; }
.m-start { margin-left: 15px; }
.pill { background: #3a86ea; color: #fff; font-weight: 600; width: 29px; height: 13px; border-radius: 7px; display: flex; align-items: center; justify-content: center; margin-left: 10px; }
.m-layout { margin-left: 11.500px; }
.g17 { margin-left: 17px; } .g20 { margin-left: 19.500px; }
.find { display: flex; align-items: center; margin-left: 17px; color: #7a8292; gap: 1px; }
.find svg { width: 10px; height: 10px; }
.right { display: flex; align-items: center; margin-left: auto; }
.right svg { width: 10px; height: 10px; margin: 0 3px 0 7px; }
.tail { display: flex; align-items: center; border-left: 1px solid #e8eaed; margin-left: 6px; padding: 0 7px 0 10px; gap: 12px; height: 12px; }
.tail svg { width: 10px; height: 8px; }
.tail .dots { width: 2px; height: 10px; stroke-width: 1.500; }

.ribbon { height: 44px; flex: none; display: flex; padding-top: 3px; border-bottom: 1px solid #e4e6ea; }
.it { width: 24px; display: flex; flex-direction: column; align-items: center; position: relative; white-space: nowrap; flex: none; }
.it svg { width: 15px; height: 15px; stroke-width: .95; margin-top: 1px; }
.it > span { line-height: 12px; margin-top: 3px; display: flex; align-items: center; }
.ribbon i, .status i { border: 1.500px solid transparent; border-top: 2px solid #676d7a; border-bottom: 0; margin-left: 3.500px; width: 0; height: 0; }
.i3 { margin-left: 3px; } .i4 { margin-left: 4px; } .i6 { margin-left: 6px; } .i7 { margin-left: 7px; }
.i10 { margin-left: 10px; } .i11 { margin-left: 11px; } .i12 { margin-left: 12px; } .i13 { margin-left: 13px; } .i14 { margin-left: 14px; } .i18 { margin-left: 18px; }
.sep::before { content: ""; position: absolute; left: -9px; top: 0; height: 36px; border-left: 1px solid #eff0f3; }
.pair { display: flex; flex-direction: column; gap: 5px; flex: none; white-space: nowrap; padding-top: 1px; }
.pair div { height: 12px; display: flex; align-items: center; line-height: 12px; }
.pair svg { width: 10px; height: 10px; margin-right: 4px; stroke-width: 1.300; }
.p-chart { margin-left: 7px; width: 50px; } .p-obj { margin-left: 3px; width: 40px; } .p-drop { margin-left: 2px; width: 52px; } .p-ref { margin-left: 7px; width: 48px; }
.ribbon-end { margin-left: 7px; height: 36px; border-left: 1px solid #eff0f3; }

.work { height: 588px; flex: none; display: flex; }
.canvas { width: 1240px; background: #f5f7f9; position: relative; overflow: hidden; }
.ruler { height: 11px; display: flex; padding-left: 325.800px; }
.ruler b { width: 20.690px; height: 11px; display: flex; justify-content: center; font: 6px/10px "Noto Sans", sans-serif; color: #545a67; position: relative; }
.ruler b::before, .ruler b::after { content: ""; position: absolute; top: 4px; height: 5px; width: 1px; background: #b6bac3; left: 4px; }
.ruler b::after { left: 16px; }
.ruler .in { background: #e2e6ef; }
.ruler .end::before { display: none; }
.ruler .end:last-child::before { display: block; } .ruler .end:last-child::after { display: none; }
.stops { position: absolute; left: 409px; top: -1px; width: 430px; height: 16px; stroke: #8b90a0; fill: #fff; }
.page { width: 586px; height: 559px; margin: 19px 0 0 331px; background: #fff; box-shadow: 0 0 9px 3px #e3e5e8; position: relative; }
.margin-marks { display: grid; grid-template-columns: 18px 408px 18px; height: 70px; padding-top: 54px; margin-left: 71px; }
.margin-marks i { height: 16px; }
.ml { border-right: 1px solid #c9c9c9; border-bottom: 1px solid #c9c9c9; }
.mt { border-top: 1.500px solid #bdbdbd; }
.mr { border-left: 1px solid #c9c9c9; border-bottom: 1px solid #c9c9c9; }
.text { width: 408px; margin-left: 89px; font-size: 9.700px; font-weight: 300; color: #494949; text-spacing-trim: space-all; }
.text p { margin: 0; height: 15.380px; line-height: 15.380px; white-space: nowrap; text-align: justify; text-align-last: justify; }
.text .in { padding-left: 20.400px; }
.text .last { text-align-last: left; letter-spacing: .55px; }
.text u { display: inline-block; width: 1px; height: 12px; margin-right: -1px; background: #222; vertical-align: middle; }
.para-tag { position: absolute; left: 40px; top: 118px; width: 18px; height: 11px; stroke: none; }
.activate { position: absolute; left: 1085px; top: 543px; color: #b1b3b6; display: flex; flex-direction: column; white-space: nowrap; }
.activate strong { font-size: 13px; line-height: 17px; font-weight: 400; }
.activate span { font-size: 9.600px; line-height: 15px; }
.scroll { width: 11px; background: #e7eaf2; display: flex; flex-direction: column; }
.scroll svg { width: 11px; height: 26px; }
.thumb { height: 112px; width: 8px; margin-left: 1px; border-radius: 4px; background: #cfd2d9; }
.scroll .pager { height: 52px; margin-top: auto; }
.side { width: 26px; background: #f9fafb; display: flex; flex-direction: column; align-items: center; gap: 13.100px; padding-top: 6px; }
.side em { width: 13px; height: 3px; border: solid #dfe1e5; border-width: 1px 0; margin-bottom: 1px; }
.side svg { width: 11px; height: 11px; stroke-width: 1.200; }
.side .notch { width: 6px; height: 4px; align-self: flex-end; margin-top: 70px; }
.side-more { margin-top: auto; width: 26px; height: 29px; border-top: 1px solid #e7e9ec; display: flex; justify-content: center; padding-top: 14px; }
.side .side-more svg { width: 12px; height: 4px; }

.status { height: 20px; flex: none; display: flex; align-items: center; gap: 10px; position: relative; background: #f8f9fb; white-space: nowrap; }
.status span:first-child { margin-left: -1px; }
.status .col { margin-left: -2px; } .status .cnt { margin-left: 4px; }
.chk, .proof, .zoom { display: flex; align-items: center; }
.chk { background: #e8edf8; margin-left: 1px; } .chk svg, .proof svg { width: 10px; height: 9px; margin-right: 3px; }
.proof { margin-left: 1px; }
.eye { position: absolute; left: 944px; top: 4px; width: 11px; height: 11px; }
.view { display: flex; gap: 6.500px; position: absolute; left: 1012px; top: 5px; }
.view svg { width: 11px; height: 11px; }
.zoom { position: absolute; left: 1076px; top: 3px; height: 13px; }
.zoom svg { width: 10px; height: 10px; margin-right: 5px; }
.minus { width: 7px; height: 1.500px; background: #555; margin: 0 9px 0 8px; }
.track { width: 92px; height: 1px; background: #888; position: relative; }
.track::after { content: ""; position: absolute; left: 42px; top: -3.500px; width: 8px; height: 8px; border: 1.200px solid #666; border-radius: 4px; background: #fff; }
.zoom .plus-z { width: 7px; height: 7px; margin: 0 8px 0 5px; }
.ime { position: absolute; left: 953px; top: -4px; width: 54px; height: 21px; background: #e7e9ec; color: #222; display: flex; align-items: center; font-size: 12.500px; gap: 8px; padding-left: 4px; }
.status .ime i { width: 3px; height: 10px; border: solid #bbb; border-width: 0 1px; margin: 0; }
.ime svg { width: 14px; height: 14px; stroke: #333; }

.taskbar { height: 19px; flex: none; display: flex; background: #1b1c1e; overflow: hidden; }
.start { width: 12px; height: 12px; margin: 7px 9px 0 3px; stroke: none; }
.start { margin: 7px 9px 0 3px; }
.searchbox { width: 231px; background: #f1f1f1; font-size: 9.400px; display: flex; align-items: center; padding: 7px 0 0 8px; line-height: 12px; white-space: nowrap; color: #555; }
.searchbox svg { width: 11px; height: 11px; margin: -2px 8px 0 0; transform: scaleX(-1); }
.searchbox .art { width: 50px; height: 16px; margin: -4px 0 0 auto; transform: none; stroke: none; }
.apps { display: flex; align-items: center; padding-left: 9px; gap: 20px; height: 26px; }
.apps svg { width: 13px; height: 13px; stroke: none; }
.apps svg:nth-child(3), .apps svg:nth-child(4) { width: 15px; height: 15px; margin: 0 -1px; }
.wps { width: 32px; height: 26px; background: #3a3b3d; display: flex; align-items: center; justify-content: center; margin: 0 -9px 0 -9px; }
.wps svg { width: 17px; height: 15px; }
.apps > svg:last-child { width: 15px; height: 15px; }
.tray { margin-left: 490px; display: flex; align-items: center; gap: 4.600px; height: 26px; color: #fff; font-size: 9px; line-height: 9px; }
.tray svg { width: 11px; height: 11px; stroke: none; }
.clock { width: 42px; text-align: center; font-size: 7.500px; line-height: 9px; margin-left: 9px; transform: translateY(-1.500px); }
.tray .grid { margin-left: 4px; }
.tray .note { margin-left: 7px; width: 12px; }

.arrow { position: absolute; left: 666px; top: 95px; width: 130px; height: 120px; stroke: none; }
.speed { position: absolute; left: 1360px; top: 509px; width: 80px; height: 41px; display: flex; align-items: center; color: #fff; }
.rates { width: 60px; height: 28px; background: #2c3139; border-radius: 14px; font: 700 7.500px/14px Roboto, sans-serif; display: flex; flex-direction: column; box-shadow: 0 0 3px #555; }
.rates span { width: 38px; display: flex; justify-content: flex-end; align-items: center; }
.rates i { width: 4px; height: 4px; border-radius: 2px; background: #55a9d4; margin-right: auto; margin-left: 8px; }
.rates span + span i { background: #3f8d56; }
.rates small { font-size: 6px; font-weight: 400; color: #aab; }
.gauge { width: 39px; height: 39px; border-radius: 50%; margin-left: -20px; flex: none; background: radial-gradient(#444a54 0 15px, transparent 15.500px), conic-gradient(#4aa6a9 0 25%, #5b8a6d 40%, #c9b65a 55%, #a9984e 65%, #75565e 80%, #474b55 90%); border: 2px solid #4c515b; display: flex; align-items: center; justify-content: center; font: 300 15.500px/1 "Open Sans", sans-serif; box-shadow: 0 0 3px #444; }
.gauge small { font-size: 8px; margin-top: 6px; }
.timer { position: absolute; left: 1296px; top: 669px; width: 31px; height: 31px; border-radius: 50%; background: linear-gradient(#2b86e6, #4ca8fa); box-shadow: 0 1px 2px 1px #d5e8fa; color: #fff; font: 8.800px/31px "Noto Sans", sans-serif; text-align: center; }
.headline { position: absolute; left: 73px; top: 324px; font-size: 70.500px; line-height: 80px; font-weight: 900; color: #fff; -webkit-text-stroke: 2px #fff; white-space: nowrap; transform: skewX(-13deg) scaleY(.87); text-shadow: 4px 6px 4px rgba(0, 0, 0, .75); }
.stand { position: absolute; left: 764px; top: 777px; width: 75px; height: 54px; background: linear-gradient(90deg, #a3a1a8, #eee 8px, #d1d1d2 18px, #ececec 50%, #d5d5d6 59px, #f3f3f3 68px, #888); }
.subtitle { position: absolute; left: 523px; top: 774px; font-size: 46.200px; line-height: 56px; font-weight: 500; color: #fff; white-space: nowrap; text-shadow: 2px 2px 2px #221843, 3px 3px 3px rgba(0, 0, 0, .6); }
.brand { position: absolute; left: 1215px; top: 640px; width: 300px; height: 165px; stroke: none; overflow: visible; }
.overlay { opacity: .74; fill: #fff; }
.outlined { stroke: #b5b5b5; stroke-width: 1.300; }
.bai { font: 800 60px Inter, "Liberation Sans", sans-serif; stroke: #ccc; stroke-width: .8; }
.du { font: 700 42px Inter, "Liberation Sans", sans-serif; fill: #000; }
.jy { font: 900 47px "Noto Sans CJK SC", sans-serif; }
.site { font: 500 33px "Noto Sans", sans-serif; fill: #fff; opacity: .86; }
```
